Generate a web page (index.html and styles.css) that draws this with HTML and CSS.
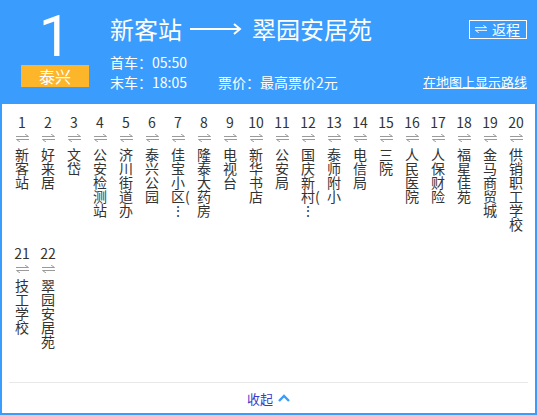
FILE: index.html
```html
<!DOCTYPE html>
<html lang="zh-CN">
<head>
<meta charset="utf-8">
<title>1路 泰兴</title>
<link rel="stylesheet" href="styles.css">
</head>
<body>
<svg class="defs" aria-hidden="true">
  <symbol id="swap" viewBox="0 0 13 8">
    <path d="M0 2.5H12.5L9 0M13 5.5H0.5L4 8" fill="none" stroke="currentColor" stroke-width="1"/>
  </symbol>
</svg>
<div class="card">
  <header class="head">
    <div class="line-col">
      <div class="line-no">1</div>
      <div class="line-tag">泰兴</div>
    </div>
    <div class="info">
      <div class="title-row">
        <h1 class="title"><span>新客站</span><svg class="dir" viewBox="0 0 52 12"><path d="M0 6H50M44 1L50 6L44 11" fill="none" stroke="#fff" stroke-width="2"/></svg><span>翠园安居苑</span></h1>
        <a class="return-btn"><svg class="swap-w"><use href="#swap"/></svg>返程</a>
      </div>
      <div class="meta first">首车：05:50</div>
      <div class="meta meta-row"><span class="time">末车：18:05</span><span>票价：最高票价2元</span><a class="map-link">在地图上显示路线</a></div>
    </div>
  </header>
  <ol class="stops">
    <li class="stop"><span class="num">1</span><svg class="swap"><use href="#swap"/></svg><span class="name">新客站</span></li>
    <li class="stop"><span class="num">2</span><svg class="swap"><use href="#swap"/></svg><span class="name">好来居</span></li>
    <li class="stop"><span class="num">3</span><svg class="swap"><use href="#swap"/></svg><span class="name">文岱</span></li>
    <li class="stop"><span class="num">4</span><svg class="swap"><use href="#swap"/></svg><span class="name">公安检测站</span></li>
    <li class="stop"><span class="num">5</span><svg class="swap"><use href="#swap"/></svg><span class="name">济川街道办</span></li>
    <li class="stop"><span class="num">6</span><svg class="swap"><use href="#swap"/></svg><span class="name">泰兴公园</span></li>
    <li class="stop"><span class="num">7</span><svg class="swap"><use href="#swap"/></svg><span class="name">佳宝小区(⋮</span></li>
    <li class="stop"><span class="num">8</span><svg class="swap"><use href="#swap"/></svg><span class="name">隆泰大药房</span></li>
    <li class="stop"><span class="num">9</span><svg class="swap"><use href="#swap"/></svg><span class="name">电视台</span></li>
    <li class="stop"><span class="num">10</span><svg class="swap"><use href="#swap"/></svg><span class="name">新华书店</span></li>
    <li class="stop"><span class="num">11</span><svg class="swap"><use href="#swap"/></svg><span class="name">公安局</span></li>
    <li class="stop"><span class="num">12</span><svg class="swap"><use href="#swap"/></svg><span class="name">国庆新村(⋮</span></li>
    <li class="stop"><span class="num">13</span><svg class="swap"><use href="#swap"/></svg><span class="name">泰师附小</span></li>
    <li class="stop"><span class="num">14</span><svg class="swap"><use href="#swap"/></svg><span class="name">电信局</span></li>
    <li class="stop"><span class="num">15</span><svg class="swap"><use href="#swap"/></svg><span class="name">三院</span></li>
    <li class="stop"><span class="num">16</span><svg class="swap"><use href="#swap"/></svg><span class="name">人民医院</span></li>
    <li class="stop"><span class="num">17</span><svg class="swap"><use href="#swap"/></svg><span class="name">人保财险</span></li>
    <li class="stop"><span class="num">18</span><svg class="swap"><use href="#swap"/></svg><span class="name">福星佳苑</span></li>
    <li class="stop"><span class="num">19</span><svg class="swap"><use href="#swap"/></svg><span class="name">金马商贸城</span></li>
    <li class="stop"><span class="num">20</span><svg class="swap"><use href="#swap"/></svg><span class="name">供销职工学校</span></li>
    <li class="stop"><span class="num">21</span><svg class="swap"><use href="#swap"/></svg><span class="name">技工学校</span></li>
    <li class="stop"><span class="num">22</span><svg class="swap"><use href="#swap"/></svg><span class="name">翠园安居苑</span></li>
  </ol>
  <div class="foot">
    <a class="collapse">收起</a>
    <svg class="chev" viewBox="0 0 12 8"><path d="M1 7L6 2L11 7" fill="none" stroke="#3a9cfd" stroke-width="2.4"/></svg>
  </div>
</div>
</body>
</html>
```
FILE: styles.css
```css
body {
  margin: 0;
  font-family: "Microsoft YaHei", "Noto Sans CJK SC", sans-serif;
  background: #fff;
}

.defs {
  display: none;
}

.card {
  width: 537px;
  box-sizing: border-box;
  border: 2px solid #3a9cfd;
  border-top: 0;
  background: #fff;
}

.head {
  height: 104px;
  box-sizing: border-box;
  background: #3a9cfd;
  color: #fff;
  display: flex;
  padding-left: 19px;
}

.line-col {
  width: 68px;
  display: flex;
  flex-direction: column;
  align-items: center;
  padding-top: 11px;
}

.line-no {
  font-family: Roboto, "Noto Sans", sans-serif;
  font-size: 58px;
  line-height: 50px;
  height: 50px;
}

.line-tag {
  margin-top: 4px;
  width: 68px;
  height: 22px;
  background: #fdb52a;
  font-size: 16px;
  line-height: 22px;
  text-align: center;
}

.info {
  flex: 1;
  margin-left: 21px;
  padding: 13px 8px 0 0;
}

.title-row {
  display: flex;
  align-items: center;
  justify-content: space-between;
  height: 32px;
}

.title {
  margin: 0;
  font-size: 24px;
  font-weight: normal;
  line-height: 32px;
  display: flex;
  align-items: center;
}

.dir {
  width: 52px;
  height: 12px;
  margin: 0 10px 0 8px;
}

.return-btn {
  display: flex;
  align-items: center;
  gap: 5px;
  height: 19px;
  box-sizing: border-box;
  padding: 0 6px 0 5px;
  border: 1px solid #fff;
  font-size: 14px;
  line-height: 17px;
  color: #fff;
}

.swap-w {
  width: 12px;
  height: 8px;
  color: #fff;
}

.meta {
  font-size: 14px;
  line-height: 20px;
}

.meta.first {
  margin-top: 7px;
}

.meta-row {
  display: flex;
}

.time {
  width: 108px;
}

.map-link {
  margin-left: auto;
  font-size: 13px;
  color: #fff;
  text-decoration: underline;
}

.stops {
  list-style: none;
  margin: 0;
  padding: 10px 6px 6px 7px;
  display: flex;
  flex-wrap: wrap;
}

.stop {
  width: 26px;
  height: 131px;
  display: flex;
  flex-direction: column;
  align-items: center;
  color: #333;
}

.num {
  font-size: 14px;
  line-height: 16px;
  height: 16px;
}

.swap {
  width: 13px;
  height: 8px;
  margin-top: 4px;
  color: #9a9a9a;
}

.name {
  align-self: flex-start;
  margin: 5px 0 0 6px;
  width: 20px;
  font-size: 14px;
  line-height: 14px;
  line-break: anywhere;
}

.foot {
  margin: 0 7px;
  border-top: 1px solid #e8e8e8;
  height: 30px;
  display: flex;
  justify-content: center;
  align-items: center;
  gap: 5px;
}

.collapse {
  font-size: 13px;
  color: #3a3acc;
}

.chev {
  width: 12px;
  height: 8px;
}
```
